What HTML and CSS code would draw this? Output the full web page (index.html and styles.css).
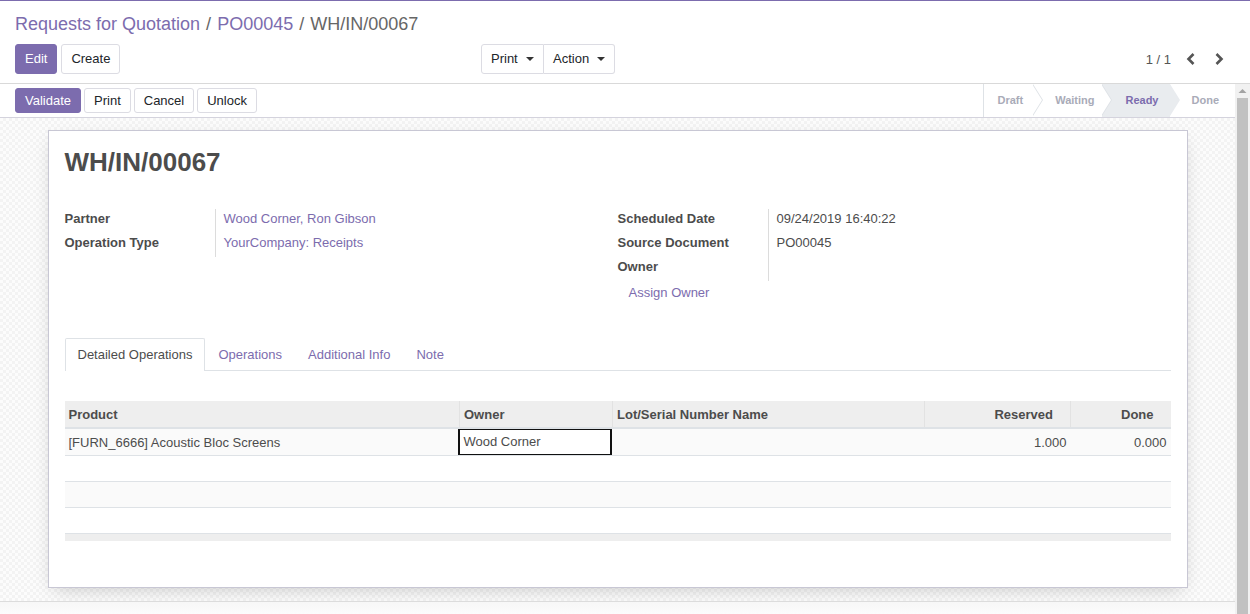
FILE: index.html
```html
<!DOCTYPE html>
<html>
<head>
<meta charset="utf-8">
<link rel="stylesheet" href="styles.css">
</head>
<body>
<div class="topline"></div>
<div class="cp">
  <div class="breadcrumb">
    <a class="crumb">Requests for Quotation</a><span class="sep">/</span><a class="crumb">PO00045</a><span class="sep">/</span><span class="current">WH/IN/00067</span>
  </div>
  <div class="cp-row">
    <div class="cp-left">
      <div class="btns">
        <button class="btn primary">Edit</button>
        <button class="btn">Create</button>
      </div>
      <div class="btn-group">
        <button class="btn drop">Print<span class="caret"></span></button>
        <button class="btn drop">Action<span class="caret"></span></button>
      </div>
    </div>
    <div class="cp-right">
      <span class="pager-val">1 / 1</span>
      <button class="pager-btn"><svg width="10" height="14" viewBox="0 0 10 14"><polyline points="7.5,2 2.5,7 7.5,12" fill="none" stroke="#555" stroke-width="2.6"/></svg></button>
      <button class="pager-btn"><svg width="10" height="14" viewBox="0 0 10 14"><polyline points="2.5,2 7.5,7 2.5,12" fill="none" stroke="#555" stroke-width="2.6"/></svg></button>
    </div>
  </div>
</div>
<div class="main">
  <div class="content">
    <div class="statusbar">
      <div class="sb-btns">
        <button class="btn sm primary">Validate</button>
        <button class="btn sm">Print</button>
        <button class="btn sm">Cancel</button>
        <button class="btn sm">Unlock</button>
      </div>
      <div class="steps">
        <div class="step first">Draft</div>
        <div class="step waiting">Waiting</div>
        <div class="step current">Ready</div>
        <div class="step last">Done</div>
      </div>
    </div>
    <div class="sheetbg">
      <div class="sheet">
        <h1 class="title">WH/IN/00067</h1>
        <div class="groups">
          <div class="group">
            <div class="row"><div class="lbl">Partner</div><div class="val"><a class="link">Wood Corner, Ron Gibson</a></div></div>
            <div class="row"><div class="lbl">Operation Type</div><div class="val"><a class="link">YourCompany: Receipts</a></div></div>
          </div>
          <div class="group">
            <div class="row"><div class="lbl">Scheduled Date</div><div class="val">09/24/2019 16:40:22</div></div>
            <div class="row"><div class="lbl">Source Document</div><div class="val">PO00045</div></div>
            <div class="row"><div class="lbl">Owner</div><div class="val"></div></div>
            <a class="btn-link">Assign Owner</a>
          </div>
        </div>
        <div class="tabs">
          <a class="tab active">Detailed Operations</a>
          <a class="tab">Operations</a>
          <a class="tab">Additional Info</a>
          <a class="tab">Note</a>
        </div>
        <table class="list">
          <colgroup>
            <col class="c1"><col class="c2"><col class="c3"><col class="c4"><col class="c5">
          </colgroup>
          <thead>
            <tr><th>Product</th><th>Owner</th><th>Lot/Serial Number Name</th><th class="num">Reserved</th><th class="num">Done</th></tr>
          </thead>
          <tbody>
            <tr class="odd"><td>[FURN_6666] Acoustic Bloc Screens</td><td class="edit"><div class="input">Wood Corner</div></td><td></td><td class="num">1.000</td><td class="num">0.000</td></tr>
            <tr><td></td><td></td><td></td><td></td><td></td></tr>
            <tr class="odd"><td></td><td></td><td></td><td></td><td></td></tr>
            <tr><td></td><td></td><td></td><td></td><td></td></tr>
          </tbody>
          <tfoot>
            <tr><td colspan="5"></td></tr>
          </tfoot>
        </table>
      </div>
    </div>
    <div class="chatter"></div>
  </div>
  <div class="scrollbar">
    <div class="sb-arrow"><svg width="15" height="14" viewBox="0 0 15 14"><polygon points="3.5,9 7.5,5 11.5,9" fill="#a3a3a3"/></svg></div>
    <div class="sb-thumb"></div>
  </div>
</div>
</body>
</html>
```
FILE: styles.css
```css
* { box-sizing: border-box; }
html, body { margin: 0; padding: 0; }
body {
  font-family: "Liberation Sans", Arial, sans-serif;
  font-size: 13px;
  color: #4c4c4c;
  background: #fff;
  overflow: hidden;
  height: 614px;
}
a { cursor: pointer; }
.topline { height: 1px; background: #7c6cae; }

/* control panel */
.cp {
  padding: 9px 15px 9px 15px;
  border-bottom: 1px solid #d9d9d9;
}
.breadcrumb {
  font-size: 18px;
  line-height: 28px;
  height: 28px;
  white-space: nowrap;
}
.crumb { color: #7c6cae; }
.sep { color: #666; margin: 0 6px; }
.current { color: #666; }
.cp-row {
  margin-top: 6px;
  height: 30px;
  display: grid;
  grid-template-columns: 1fr 1fr;
}
.cp-left {
  display: flex;
  justify-content: space-between;
  padding-right: 10px;
}
.btns { display: flex; gap: 4px; }
.btn {
  font-family: inherit;
  font-size: 13px;
  height: 30px;
  padding: 0 9px;
  background: #fff;
  color: #212529;
  border: 1px solid #dcdce3;
  border-radius: 3px;
  line-height: 28px;
  cursor: pointer;
}
.btn.primary {
  background: #7c6cae;
  border-color: #7c6cae;
  color: #fff;
}
.btn-group { display: flex; }
.btn-group .btn { border-radius: 0; }
.btn-group .btn:first-child { border-radius: 3px 0 0 3px; width: 63px; padding-left: 9px; }
.btn-group .btn:last-child { border-radius: 0 3px 3px 0; border-left: 0; width: 71px; padding-left: 9px; }
.drop { display: flex; align-items: center; }
.caret {
  display: inline-block;
  width: 0; height: 0;
  margin-left: 8px;
  border-top: 4px solid #333;
  border-left: 4px solid transparent;
  border-right: 4px solid transparent;
}
.cp-right {
  display: flex;
  justify-content: flex-end;
  align-items: center;
  padding-right: 2px;
}
.pager-val { color: #555; margin-right: 6px; }
.pager-btn {
  width: 28px; height: 30px;
  border: 0; background: transparent;
  display: flex; align-items: center; justify-content: center;
  padding: 0;
}

/* main area */
.main {
  height: 530px;
  display: flex;
  overflow: hidden;
}
.content {
  flex: 1;
  min-width: 0;
  overflow: hidden;
}
.scrollbar {
  width: 15px;
  background: #f1f1f1;
  display: flex;
  flex-direction: column;
}
.sb-arrow { height: 14px; display: flex; }
.sb-thumb {
  flex: 1;
  margin: 0 2px 0 2px;
  background: #c1c1c1;
}

.statusbar {
  height: 34px;
  border-bottom: 1px solid #d4d3dd;
  display: flex;
  justify-content: space-between;
  padding-left: 15px;
}
.sb-btns { display: flex; gap: 3px; padding-top: 4px; }
.btn.sm { height: 25px; line-height: 23px; padding: 0 9px; }
.steps { display: flex; height: 33px; }
.step {
  position: relative;
  height: 33px;
  line-height: 33px;
  font-size: 11px;
  font-weight: bold;
  color: #a9abb8;
  padding: 0 11px 0 22px;
  background: #fff;
}
.step.first { border-left: 1px solid #dee2e6; padding-left: 13px; padding-right: 10px; }
.step.waiting { padding-right: 8px; }
.step.current { padding-left: 23px; }
.step.last { padding-right: 16px; }
.step::before, .step::after {
  content: "";
  position: absolute;
  top: 0;
  width: 0; height: 0;
  border-top: 16.5px solid transparent;
  border-bottom: 16.5px solid transparent;
  border-left: 10px solid #dee2e6;
  left: 100%;
  z-index: 2;
}
.step::after { border-left-color: #fff; margin-left: -1px; z-index: 3; }
.step.last::before, .step.last::after { display: none; }
.step.current { background: #e9ecef; color: #7c6cae; }
.step.current::after { border-left-color: #e9ecef; }
.step.current::before { border-left-color: #e9ecef; }

/* sheet */
.sheetbg {
  padding: 12px 0 13px;
  background: repeating-conic-gradient(#f3f3f3 0% 25%, #fcfcfc 0% 50%) 0 0 / 6px 6px;
}
.sheet {
  width: 1140px;
  margin: 0 auto;
  background: #fff;
  border: 1px solid #c8c7d4;
  box-shadow: 0 6px 18px -6px rgba(0,0,0,0.22);
  padding: 16px 16px 46px;
}
.title {
  margin: 0;
  font-size: 26px;
  line-height: 31px;
  font-weight: bold;
  color: #4c4c4c;
}
.groups {
  margin-top: 31px;
  display: grid;
  grid-template-columns: 1fr 1fr;
}
.row { display: flex; height: 24px; }
.lbl {
  width: 150px;
  font-weight: bold;
  line-height: 20px;
  color: #4c4c4c;
}
.val {
  border-left: 1px solid #dcdcdc;
  padding-left: 8px;
  line-height: 20px;
  flex: 1;
}
.link { color: #7c6cae; }
.btn-link {
  display: block;
  color: #7c6cae;
  padding: 1px 11px 0;
  line-height: 22px;
  height: 24px;
}

.tabs {
  margin-top: 33px;
  display: flex;
  border-bottom: 1px solid #dee2e6;
  height: 33px;
}
.tab {
  padding: 0 12px;
  line-height: 31px;
  height: 33px;
  color: #7c6cae;
  border: 1px solid transparent;
  border-bottom: 0;
}
.tab.active {
  color: #4c4c4c;
  border-color: #dee2e6;
  background: #fff;
  border-radius: 2px 2px 0 0;
}

.list {
  margin-top: 30px;
  width: 100%;
  border-collapse: collapse;
  table-layout: fixed;
}
.c1 { width: 395px; }
.c2 { width: 153px; }
.c3 { width: 312px; }
.c4 { width: 146px; }
.c5 { width: 100px; }
.list th {
  height: 27px;
  background: #eee;
  border-bottom: 2px solid #dee2e6;
  border-left: 1px solid #e2e2e2;
  text-align: left;
  padding: 0 4px;
  font-weight: bold;
  color: #4c4c4c;
}
.list th:first-child { border-left: 0; }
.list th.num { text-align: right; padding-right: 17px; }
.list td {
  height: 26px;
  border-bottom: 1px solid #dee2e6;
  padding: 0 4px;
  white-space: nowrap;
  color: #4c4c4c;
}
.list td.num { text-align: right; }
.list tr.odd td { background: #fafafa; }
.list td.edit { padding: 0; }
.input {
  height: 28px;
  margin: -1px 1px -1px -2px;
  border: 2px solid #111;
  line-height: 24px;
  padding-left: 4px;
  background: #fff;
}
.list tfoot td {
  height: 7px;
  background: #eee;
  border-bottom: 0;
  border-top: 1px solid #dee2e6;
}
.chatter {
  height: 120px;
  border-top: 1px solid #dcdcdc;
  background: linear-gradient(#f7f7f7, #fff 20px);
}
```
